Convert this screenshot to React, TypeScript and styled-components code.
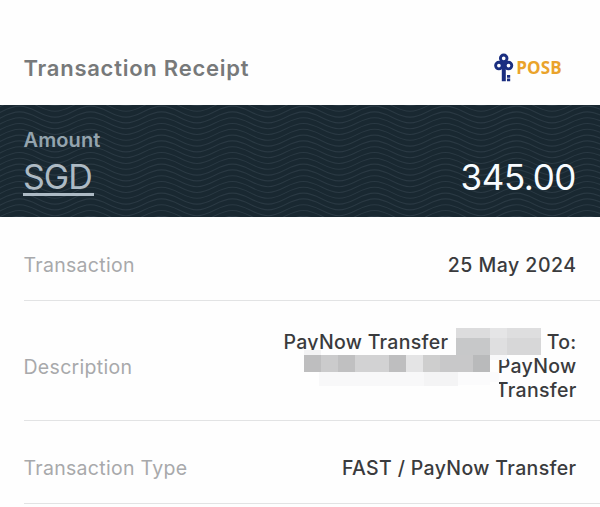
import React from "react";
import styled, { createGlobalStyle } from "styled-components";

const GlobalStyle = createGlobalStyle`
  * { box-sizing: border-box; }
  body { margin: 0; background: #fefefe; font-family: Inter, "Liberation Sans", sans-serif; }
`;

const Receipt = styled.main`
  width: 600px;
  height: 507px;
  overflow: hidden;
  background: #fefefe;
`;

const Header = styled.header`
  height: 105px;
  padding: 30px 24px 0 23.5px;
  display: flex;
  align-items: center;
  justify-content: space-between;
`;

const Title = styled.h1`
  margin: 0;
  color: #77797a;
  font-size: 22px;
  font-weight: 600;
  letter-spacing: 0.75px;
  white-space: nowrap;
`;

const Brand = styled.div`
  display: flex;
  align-items: center;
  gap: 2px;
  padding-right: 14px;
`;

const BrandName = styled.span`
  color: #eaa32b;
  font-family: "Open Sans", sans-serif;
  font-size: 17px;
  font-weight: 700;
  line-height: 28px;
  letter-spacing: 0.2px;
`;

const AmountBanner = styled.section`
  position: relative;
  height: 112px;
  padding: 21px 24px 0 23px;
  background: #192831;
`;

const WaveBackdrop = styled.svg`
  position: absolute;
  inset: 0;
`;

const AmountContent = styled.div`
  position: relative;
`;

const AmountLabel = styled.div`
  height: 29px;
  padding-left: 0.5px;
  line-height: 28px;
  color: #94a4ae;
  font-size: 20px;
  font-weight: 600;
  letter-spacing: 0.1px;
`;

const AmountLine = styled.div`
  display: flex;
  justify-content: space-between;
  align-items: flex-start;
`;

const Currency = styled.span`
  height: 41px;
  padding: 0 2px 0 0;
  border-bottom: 3px solid #adbac4;
  color: #adbac4;
  font-size: 34px;
  line-height: 44px;
  letter-spacing: -1px;
`;

const AmountValue = styled.span`
  color: #f8fcff;
  font-size: 35px;
  line-height: 44px;
  letter-spacing: -0.4px;
`;

const Row = styled.div<{ $height: number }>`
  height: ${({ $height }) => $height}px;
  margin-left: 23.5px;
  padding-top: 12px;
  padding-right: 23.5px;
  border-bottom: 1px solid #e2e3e4;
  display: flex;
  align-items: center;
  justify-content: space-between;
`;

const Label = styled.span`
  color: #a8a9ab;
  font-size: 19.5px;
  letter-spacing: 0.3px;
`;

const Value = styled.span<{ $tracking?: number }>`
  color: #3a3b3d;
  font-size: 19.5px;
  font-weight: 500;
  letter-spacing: ${({ $tracking = 0.36 }) => $tracking}px;
`;

const Description = styled.div`
  position: relative;
  top: -1px;
  display: flex;
  flex-direction: column;
  align-items: flex-end;
  color: #3a3b3d;
  font-size: 19.5px;
  font-weight: 500;
  letter-spacing: 0.3px;
  line-height: 24px;
`;

const DescriptionLine = styled.div`
  display: flex;
  justify-content: space-between;
  min-width: 293px;
  &:not(:first-child) { min-width: 0; }
`;

const Redaction = styled.svg`
  position: absolute;
  right: 25.5px;
  top: -2px;
`;

const waves = Array.from({ length: 23 }, (_, i) => {
  const y = i * 5.8 - 5;
  let d = `M-16 ${y + 5.5}`;
  for (let x = -16; x < 620; x += 71) {
    d += `C${x + 14} ${y + 5.5} ${x + 21} ${y - 5.5} ${x + 35.5} ${y - 5.5}S${x + 57} ${y + 5.5} ${x + 71} ${y + 5.5}`;
  }
  return d;
});

const mosaic: [number, number, number, number, string][] = [
  [172, 0, 34, 10, "#dcdcdd"],
  [206, 0, 17, 10, "#e5e5e6"],
  [223, 0, 34, 10, "#dededf"],
  [172, 10, 34, 17, "#c7c8c9"],
  [206, 10, 17, 17, "#dfdfe0"],
  [223, 10, 34, 17, "#d7d7d8"],
  [20, 22, 17, 5, "#f3f3f4"],
  [20, 27, 17, 17, "#bebebf"],
  [37, 27, 17, 17, "#cbcbcc"],
  [54, 27, 17, 17, "#c0c0c1"],
  [71, 27, 34, 17, "#d2d2d3"],
  [105, 27, 17, 17, "#bebebf"],
  [122, 27, 17, 17, "#e4e4e5"],
  [139, 27, 17, 17, "#cecece"],
  [156, 27, 34, 17, "#c8c8c9"],
  [189, 27, 17, 17, "#b9babb"],
  [206, 27, 17, 5, "#f8f8f9"],
  [35, 44, 105, 14, "#f8f8f9"],
  [140, 44, 34, 14, "#f4f4f5"],
  [174, 44, 41, 13, "#fbfbfc"],
  [206, 54, 9, 16, "#fefefe"],
];

function KeyLogo() {
  return (
    <svg width="20" height="30" viewBox="0 0 20 30" aria-hidden="true">
      <g fill="none" stroke="#1a2e80" strokeWidth="2.9">
        <circle cx="9.7" cy="5.3" r="3.3" />
        <circle cx="4.9" cy="12.6" r="3.3" />
        <circle cx="14.5" cy="12.6" r="3.3" />
      </g>
      <path d="M7.8 9h4v19.2h-4zM13 22h3.2v2.7H13zM13 25.6h3.2v2.6H13z" fill="#1a2e80" />
    </svg>
  );
}

export default function App() {
  return (
    <>
      <GlobalStyle />
      <Receipt>
        <Header>
          <Title>Transaction Receipt</Title>
          <Brand><KeyLogo /><BrandName>POSB</BrandName></Brand>
        </Header>
        <AmountBanner>
          <WaveBackdrop width="600" height="112" aria-hidden="true">
            {waves.map((d, i) => <path key={i} d={d} fill="none" stroke="#2a3943" strokeWidth="1.1" />)}
          </WaveBackdrop>
          <AmountContent>
            <AmountLabel>Amount</AmountLabel>
            <AmountLine>
              <Currency>SGD</Currency>
              <AmountValue>345.00</AmountValue>
            </AmountLine>
          </AmountContent>
        </AmountBanner>
        <Row $height={84}>
          <Label>Transaction</Label><Value $tracking={0.5}>25 May 2024</Value>
        </Row>
        <Row $height={120}>
          <Label>Description</Label>
          <Description>
            <DescriptionLine><span>PayNow Transfer</span><span>To:</span></DescriptionLine>
            <DescriptionLine>PayNow</DescriptionLine>
            <DescriptionLine>Transfer</DescriptionLine>
            <Redaction width="267" height="72" aria-hidden="true">
              {mosaic.map(([x, y, w, h, fill]) => <rect key={`${x}-${y}`} x={x} y={y} width={w} height={h} fill={fill} />)}
            </Redaction>
          </Description>
        </Row>
        <Row $height={83}>
          <Label>Transaction Type</Label><Value>FAST / PayNow Transfer</Value>
        </Row>
      </Receipt>
    </>
  );
}
